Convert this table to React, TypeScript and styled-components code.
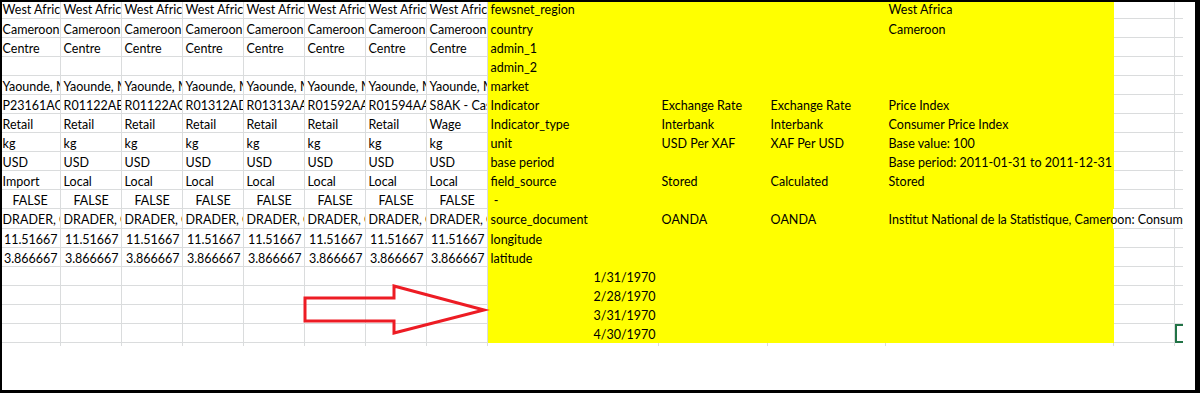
import React from "react";
import styled, { createGlobalStyle, css } from "styled-components";

const GlobalStyle = createGlobalStyle`
  html, body { margin: 0; padding: 0; background: #fff; }
  #root { width: 1200px; height: 393px; }
`;

const Frame = styled.div`
  position: relative;
  box-sizing: border-box;
  width: 1200px;
  height: 393px;
  background: #fff;
  border-style: solid;
  border-color: #000;
  border-width: 2px 5px 3px 2px;
  overflow: hidden;
`;

const Viewport = styled.div`
  position: relative;
  width: 1181px;
  height: 344px;
  overflow: hidden;
`;

const Sheet = styled.div`
  display: grid;
  grid-template-columns: repeat(8, 61px) 171px 109px 118px 228px 61px 61px;
  grid-auto-rows: 19.1px;
  margin-left: -2.4px;
  margin-top: -2.6px;
  width: max-content;
  font-family: Lato, "Open Sans", sans-serif;
  font-size: 12.5px;
  color: #000;
`;

type Align = "l" | "r" | "c";

const Cell = styled.div<{ $align: Align; $fill: boolean; $span: number; $sel: boolean }>`
  box-sizing: border-box;
  grid-column: span ${(p) => p.$span};
  padding: 3px 2px 0 3px;
  white-space: pre;
  overflow: hidden;
  line-height: 16px;
  text-align: ${(p) => (p.$align === "r" ? "right" : p.$align === "c" ? "center" : "left")};
  background: ${(p) => (p.$fill ? "#ffff00" : "#fff")};
  border-right: 1px solid ${(p) => (p.$fill ? "#ffff00" : "#dadcdd")};
  border-bottom: 1px solid ${(p) => (p.$fill ? "#ffff00" : "#dadcdd")};
  outline: ${(p) => (p.$sel ? "2px solid #217346" : "none")};
  outline-offset: -2px;
  ${(p) =>
    p.$span > 1 &&
    p.$fill &&
    css`
      background: linear-gradient(to right, #ffff00 0, #ffff00 227px, #fff 227px);
      border-image: linear-gradient(to right, #ffff00 227px, #dadcdd 227px) 1;
    `}
`;

const ArrowSvg = styled.svg`
  position: absolute;
  left: 298px;
  top: 281px;
  overflow: visible;
`;

type C = { t?: string; a?: Align; span?: number };

const same = (t: string, a: Align = "l"): C[] => Array.from({ length: 8 }, () => ({ t, a }));

const left: C[][] = [
  same("West Africa"),
  same("Cameroon"),
  same("Centre"),
  same(""),
  same("Yaounde, Mfoundi"),
  ["P23161AG", "R01122AB", "R01122AC", "R01312AD", "R01313AA", "R01592AA", "R01594AA", "S8AK - Cassava"].map(
    (t) => ({ t })
  ),
  [...Array.from({ length: 7 }, () => ({ t: "Retail" })), { t: "Wage" }],
  same("kg"),
  same("USD"),
  [{ t: "Import" }, ...Array.from({ length: 7 }, () => ({ t: "Local" }))],
  same("FALSE", "c"),
  same("DRADER, Centre"),
  same("11.51667", "r"),
  same("3.866667", "r"),
  same(""),
  same(""),
  same(""),
  same(""),
  same(""),
];

const yellow: (C[] | null)[] = [
  [{ t: "fewsnet_region" }, {}, {}, { t: "West Africa" }],
  [{ t: "country" }, {}, {}, { t: "Cameroon" }],
  [{ t: "admin_1" }, {}, {}, {}],
  [{ t: "admin_2" }, {}, {}, {}],
  [{ t: "market" }, {}, {}, {}],
  [{ t: "Indicator" }, { t: "Exchange Rate" }, { t: "Exchange Rate" }, { t: "Price Index" }],
  [{ t: "Indicator_type" }, { t: "Interbank" }, { t: "Interbank" }, { t: "Consumer Price Index" }],
  [{ t: "unit" }, { t: "USD Per XAF" }, { t: "XAF Per USD" }, { t: "Base value: 100" }],
  [{ t: "base period" }, {}, {}, { t: "Base period: 2011-01-31 to 2011-12-31" }],
  [{ t: "field_source" }, { t: "Stored" }, { t: "Calculated" }, { t: "Stored" }],
  [{ t: " -" }, {}, {}, {}],
  [
    { t: "source_document" },
    { t: "OANDA" },
    { t: "OANDA" },
    { t: "Institut National de la Statistique, Cameroon: Consumer Price Index", span: 3 },
  ],
  [{ t: "longitude" }, {}, {}, {}],
  [{ t: "latitude" }, {}, {}, {}],
  [{ t: "1/31/1970", a: "r" }, {}, {}, {}],
  [{ t: "2/28/1970", a: "r" }, {}, {}, {}],
  [{ t: "3/31/1970", a: "r" }, {}, {}, {}],
  [{ t: "4/30/1970", a: "r" }, {}, {}, {}],
  null,
];

export default function App() {
  const cells: React.ReactNode[] = [];
  left.forEach((row, r) => {
    row.forEach((c, i) =>
      cells.push(
        <Cell key={`l${r}-${i}`} $align={c.a ?? "l"} $fill={false} $span={1} $sel={false}>
          {c.t}
        </Cell>
      )
    );
    const y = yellow[r];
    const ycells: C[] = y ?? [{}, {}, {}, {}];
    let used = 0;
    ycells.forEach((c, i) => {
      const span = c.span ?? 1;
      used += span;
      cells.push(
        <Cell key={`y${r}-${i}`} $align={c.a ?? "l"} $fill={!!y} $span={span} $sel={false}>
          {c.t}
        </Cell>
      );
    });
    const rest = 6 - used;
    for (let k = 0; k < rest; k++) {
      const sel = r === 17 && k === rest - 1;
      cells.push(<Cell key={`w${r}-${k}`} $align="l" $fill={false} $span={1} $sel={sel} />);
    }
  });

  return (
    <>
      <GlobalStyle />
      <Frame>
        <Viewport>
          <Sheet>{cells}</Sheet>
        </Viewport>
        <ArrowSvg width="190" height="54" viewBox="0 0 190 54">
          <polygon
            points="5,15 94,15 94,3 184,27 94,50 94,38 5,38"
            fill="none"
            stroke="#ed1c24"
            strokeWidth="3"
            strokeLinejoin="miter"
          />
        </ArrowSvg>
      </Frame>
    </>
  );
}
